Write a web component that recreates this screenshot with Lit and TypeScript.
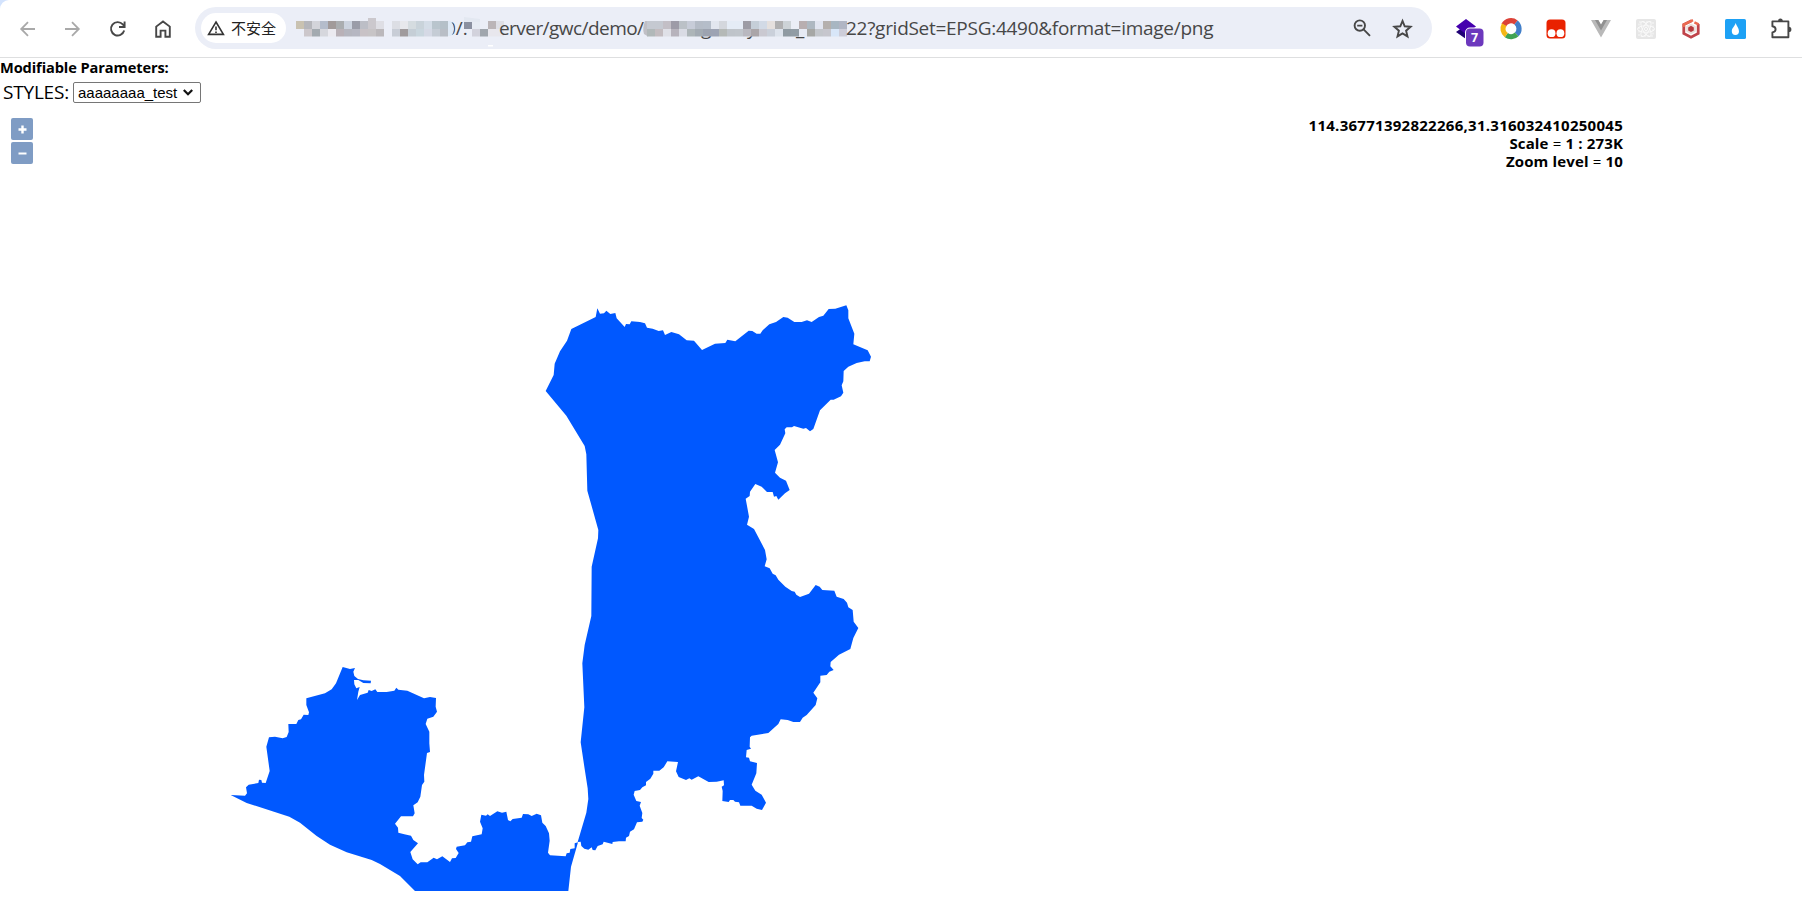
import { LitElement, html, svg, css } from "lit";
import { customElement, state } from "lit/decorators.js";

/** A run of outline vertices, in thirds of a pixel from its own survey origin. */
type Run = [number, number, string];

const EAST: Run[] = [
  [530, 290, "47,303 71,255 74,221 90,184 111,152 124,117 197,81 202,55 210,71 222,70 229,62 241,72 256,69 260,85 284,111 288,102 299,103 304,94 330,96 345,100 351,113 368,116 386,123 399,121 405,135 424,126 447,133 470,151 492,152 516,180 555,161 586,159 592,149 616,154 656,122 667,123 680,131 691,131 698,121 718,103 738,96 760,81 773,83 793,96 815,96 831,91 845,96 867,81 880,77 896,57 916,56 949,46 955,61 955,85 973,131 970,163 1013,181 1023,200 1019,214 1004,214 980,219 955,230 941,243 940,274 935,286 940,308 933,319 911,329 902,329 870,361 850,417 840,424 828,414 820,416 792,408 786,412 770,412 764,418 766,430 750,464 734,480 744,517 735,548 750,563 768,572 779,600 765,610 745,629 739,618 732,620 728,606 711,606 695,590 676,582 660,605 659,618 647,626 657,680 651,704"],
  [560, 470, "582,177 615,240 620,268 614,289 629,295 638,311 647,316 655,329 676,350 695,363 704,365 709,374 720,381 747,371 767,345 779,350 787,360 823,362 830,380 851,387 861,398 865,412 878,420 881,455 895,474 880,504 871,537 837,554 812,576 811,589 821,600 808,605 800,615 781,617 781,637"],
  [560, 660, "760,98 772,115 767,135 740,165 728,173 720,186 700,186 683,180 662,178 655,192 625,219 575,227 570,232 569,260 573,266 560,270 558,292 567,293 570,304 591,309 589,340 575,374 586,392 605,404 618,428 606,450 590,446 575,437 541,437 537,427 525,425 520,420 510,420 506,426 487,423 488,393 485,380 492,376 491,361 470,365 446,366 415,349 395,359 388,355 378,360 356,351 348,334 354,306 322,304 311,322 298,332 280,332 280,341 271,356 258,366 258,376 247,382 240,390 224,393 221,404 229,423 243,426 239,437 247,459 245,474 250,479 247,485 231,487 222,508 210,515 207,528 198,533 197,544 177,544 158,546 157,552 131,545 128,553 113,558 106,571 98,570 95,562 85,569 73,566 64,558 62,545 53,546 79,458 85,417 83,385 73,320 62,247 73,142 67,10"],
  [560, 470, "74,525 94,438 95,290 114,205 115,180 82,62"],
  [530, 290, "169,493 164,468 109,377"],
];

const WEST: Run[] = [
  [220, 650, "32,435 75,437 81,430 78,412 86,404 115,399 117,389 124,390 126,398 137,399 149,363 139,290 147,262 165,260 188,265 200,261 206,246 205,222 229,222 235,210 243,208 251,194 265,195 267,187 259,165 259,145 315,130 335,118 348,100 368,51 390,57 405,54 400,65 403,78 414,87 430,91 453,92 452,100 430,99 415,90 402,90 403,103 409,115 419,111 415,125 411,150 420,135 443,128 446,120 455,123 466,118 472,126 500,126 523,122 529,113 535,119 562,122 612,145 630,141 648,144 647,170 651,185 640,200 622,206 617,222 628,245 628,280 630,306 621,309 612,375 613,395 606,405 601,440 593,457 580,466 584,490 579,499 543,499 525,521 534,533 535,548 553,553 573,557 580,570 594,580 571,606 578,628"],
  [380, 780, "113,253 122,247 142,247 161,233 171,238 187,229 210,246 216,235 227,234 236,219 228,207 230,200 255,196 262,187 273,185 277,169 305,163 308,145 300,125 304,104 318,107 323,103 330,108 352,94 366,98 379,95 384,120 391,124 398,117 425,113 429,102 445,103 455,108 470,101 483,106 487,128 497,138 507,160 509,182 504,218 510,226 557,229 560,220 569,218 571,207 584,205 584,190 594,187 573,260 565,333 105,333 60,288 0,252"],
  [220, 650, "455,630 380,607 330,584 290,558 240,518 208,500 80,459"],
];

const outline = (runs: Run[]) =>
  runs
    .flatMap(([ox, oy, pts]) =>
      pts.split(" ").map((p) => {
        const [x, y] = p.split(",").map(Number);
        return `${(ox + x / 3).toFixed(2)},${(oy + y / 3).toFixed(2)}`;
      })
    )
    .join(" ");

/** Redaction tiles, 8px wide, two rows; "-" leaves a tile out. */
const HOST_TOP = "c9c2b1 b5b6bb d3d4da b4bccb a19a9a aaadb0 ccd3df 9a9ca8 bcbec6 cbc8cd dedee4 - dcdee4 e7e8ec d5dce0 c9d3da d4dde7 b9c5cd b5c0c8 - - 8a90a0 e6ebf3 - bbb5b8 dedfe6".split(" ");
const HOST_LOW = "- ccc7cb a3aab0 d6d7dd ebeaf0 b9b1b7 b5b6bf b6b7c2 c8c2c6 c7c4c6 bbb8bb - c8cdd6 a09b9d c5ced6 c9d6de d5d9e5 c5ccd5 b9bec6 - - - d2d2dc a0a6ad e8e7ed e8e7ed".split(" ");
const LAYER_TOP = "c5c9d1 c5c9d1 c3bfc6 9d9ba7 bbc1c7 c7ccd8 b5bcc7 b5bdc9 e2e6ef d4d7dd e5ecf6 e5ecf6 9d9ca5 c5ced8 d2dae6 e5e0de b0b0b1 cdd3d7 ebeef6 b8aeb0 aeb8c1 e1e5f0 b5b0ad a8b6c2 b0b5c4".split(" ");
const LAYER_LOW = "b1b8b9 c3bcc0 dfe0e7 b7b3bc d9dbe4 adb5b8 a3abb3 9da3b0 9da3b3 b5b9b7 bfc4ca c0c5cb b9b8bf aaa5a8 cac9d1 cad0da dde3ec 8f9aa2 919ca4 e6eaf4 a6a7a5 c3c6cb c6c6cd d8e6f8 cdcdd9".split(" ");

const tiles = (row: string[], x0: number, y: number, h: number) =>
  row.map((c, i) => (c === "-" ? "" : svg`<rect x=${x0 + i * 8} y=${y} width="8" height=${h} fill=${"#" + c}></rect>`));

@customElement("browser-toolbar")
export class BrowserToolbar extends LitElement {
  static styles = css`
    :host { display: block; background: #d3e3fd; }
    .bar {
      display: flex; align-items: center; height: 57px; box-sizing: content-box;
      padding-left: 5px; background: #fff; border-bottom: 1px solid #dedfe0; border-top-left-radius: 9px;
    }
    .cell { width: 45px; flex: none; display: flex; justify-content: center; }
    .cell svg, .tool svg { display: block; overflow: visible; }
    .omnibox {
      display: flex; align-items: center; box-sizing: border-box; width: 1237px; height: 42px; flex: none;
      margin: 0 11px 1px 10px; padding: 0 10px 0 6px; border-radius: 21px; background: #ebeef7;
    }
    .chip {
      display: flex; align-items: center; gap: 6px; box-sizing: border-box; width: 85px; height: 30px;
      padding-left: 6px; border-radius: 15px; background: #fff; color: #222;
      font: 15px/30px "Noto Sans CJK SC", sans-serif; white-space: nowrap; flex: none;
    }
    .url {
      display: flex; align-items: center; flex: 1; height: 42px; color: #474747; white-space: pre;
      font: 19px/42px "Open Sans", "Noto Sans", sans-serif;
    }
    .redact { display: block; flex: none; overflow: visible; }
    .host { margin-left: 10px; }
    .path { width: 145px; letter-spacing: -0.55px; flex: none; }
    .query { letter-spacing: -0.28px; }
    .tool { width: 40px; flex: none; display: flex; justify-content: center; }
    .mono { font: 19px "Open Sans", sans-serif; fill: #474747; }
    .count { font: bold 12.5px "Open Sans", sans-serif; fill: #fff; }
  `;

  render() {
    return html`
      <header class="bar">
        <div class="cell">
          <svg width="16" height="16" fill="none" stroke="#a9a9a9" stroke-width="1.8"><path d="M15 8H1.8M8 1.2L1.2 8L8 14.8"/></svg>
        </div>
        <div class="cell">
          <svg width="16" height="16" fill="none" stroke="#a9a9a9" stroke-width="1.8"><path d="M0 8H13.2M7 1.2L13.8 8L7 14.8"/></svg>
        </div>
        <div class="cell">
          <svg width="16" height="16" fill="none" stroke="#474747" stroke-width="1.9"><path d="M14.2 9.6A6.7 6.7 0 1 1 12.8 3.4L14.6 5.4M14.6 0.4V6H9"/></svg>
        </div>
        <div class="cell">
          <svg width="16" height="18" fill="none" stroke="#474747" stroke-width="1.9"><path d="M1.2 16.8V6.6L8 1.4L14.8 6.6V16.8H10.4V10.6H5.6V16.8Z"/></svg>
        </div>
        <div class="omnibox">
          <div class="chip">
            <svg width="18" height="16" fill="none" stroke="#333" stroke-width="1.6"><path d="M9 2L16.4 14.4H1.6ZM9 6.4V10.2M9 11.4V13"/></svg>
            <span>不安全</span>
          </div>
          <div class="url">
            <svg class="redact host" width="203" height="42">
              <text class="mono" x="149" y="28">0/.</text>
              ${tiles(HOST_TOP, 0, 14, 8)} ${tiles(HOST_LOW, 0, 22, 7.5)}
              <rect x="72" y="11" width="8" height="4" fill="#cbc8cd"></rect>
              <path d="M152 14h3q3 4 3 8t-3 7h-3z" fill="#dfeaf6"></path>
              <path d="M168 10l16 2v3h-16z" fill="#e3e8f1"></path>
              <rect x="192" y="38" width="5" height="1.5" fill="#fff"></rect>
            </svg>
            <span class="path">erver/gwc/demo/</span>
            <svg class="redact" width="202" height="42">
              <text class="mono" x="57" y="28">g</text><text class="mono" x="103" y="28">y</text><text class="mono" x="152" y="28">_</text>
              <path d="M4 14H1Q-2 22 0 27L4 29.5Z" fill="#c0bfc5"></path>
              ${tiles(LAYER_TOP, 3, 14, 8)} ${tiles(LAYER_LOW, 3, 22, 7.5)}
            </svg>
            <span class="query">22?gridSet=EPSG:4490&amp;format=image/png</span>
          </div>
          <div class="tool">
            <svg width="18" height="18" fill="none" stroke="#474747" stroke-width="1.9"><circle cx="6.8" cy="6.6" r="5.2"/><path d="M10.6 10.4L17 16.8M4.2 6.6H9.4"/></svg>
          </div>
          <div class="tool">
            <svg width="20" height="19" fill="none" stroke="#474747" stroke-width="1.9"><path d="M10.5 1.9L12.7 7.3L18.6 7.8L14.1 11.7L15.5 17.4L10.5 14.4L5.5 17.4L6.9 11.7L2.4 7.8L8.3 7.3Z"/></svg>
          </div>
        </div>
        <div class="cell">
          <svg width="20" height="20">
            <path d="M0 13L10 6L20 13L10 20Z" fill="#1f0075"/><path d="M0 7.6L10 0L20 7.6L10 15.2Z" fill="#4500ae"/>
            <rect x="9" y="8.5" width="19" height="20" rx="5" fill="#fff"/><rect x="10" y="9.5" width="17.5" height="18" rx="4" fill="#6c38bd"/>
            <text class="count" x="15" y="23">7</text>
          </svg>
        </div>
        <div class="cell">
          <svg width="20" height="20" fill="none" stroke-width="5.2">
            <path d="M2.8 6A8 8 0 0 1 15 3.5" stroke="#dc4238"/><path d="M15 3.5A8 8 0 0 1 15.7 15.4" stroke="#427fc9"/>
            <path d="M15.7 15.4A8 8 0 0 1 5.3 16.2" stroke="#40a354"/><path d="M5.3 16.2A8 8 0 0 1 3.2 5.7" stroke="#f5b716"/>
          </svg>
        </div>
        <div class="cell">
          <svg width="20" height="20"><rect x=".5" y=".5" width="19" height="19" rx="3.5" fill="#e92200"/><circle cx="5.6" cy="14.2" r="3.9" fill="#fff"/><circle cx="14.4" cy="14.2" r="3.9" fill="#fff"/></svg>
        </div>
        <div class="cell">
          <svg width="20" height="18"><path d="M0 0H7L10 5.2L13 0H20L10 17.6Z" fill="#b9b9b9"/><path d="M4 0H7.4L10 4.6L12.6 0H16L10 10.6Z" fill="#909090"/></svg>
        </div>
        <div class="cell">
          <svg width="20" height="20" fill="none" stroke="#fafafa" stroke-width=".9">
            <rect width="20" height="20" rx="2" fill="#e6e6e6" stroke="none"/>
            <ellipse cx="10" cy="10" rx="8.5" ry="3.3"/><ellipse cx="10" cy="10" rx="8.5" ry="3.3" transform="rotate(60 10 10)"/><ellipse cx="10" cy="10" rx="8.5" ry="3.3" transform="rotate(120 10 10)"/>
            <path d="M3 3H17V17H3Z" stroke-dasharray="2 1.5"/><circle cx="10" cy="10" r="1.6"/>
          </svg>
        </div>
        <div class="cell">
          <svg width="18" height="20" fill="none">
            <path d="M9.6 1.8L1.8 5.6V14.4L9 18.2L16.2 14.4V5" stroke="#c0444a" stroke-width="2.8"/><path d="M1.8 8V5.6L11 1.2M12.4 3.4L16.6 5.4" stroke="#ea6a50" stroke-width="2.6"/>
            <path d="M9 4.6L13.8 7.2V12.6L9 15.2L4.2 12.6V7.2Z" fill="#eadfda"/><path d="M9 6.8L11.8 8.6V11.4L9 13L6.2 11.4V8.6Z" fill="#b8383c"/>
          </svg>
        </div>
        <div class="cell">
          <svg width="21" height="20"><rect width="21" height="20" rx="1.6" fill="#1da1f5"/><path d="M10.6 4C11.4 7 14 9 14 12.2A3.6 3.7 0 0 1 6.8 12.2C6.8 9 9.8 7.4 10.6 4Z" fill="#fff"/></svg>
        </div>
        <div class="cell">
          <svg width="20" height="20">
            <path d="M1.4 2.4H17.4V18.2H1.4V13.4Q4.6 13 4.6 10.3T1.4 7.2Z" fill="none" stroke="#474747" stroke-width="1.9" stroke-linejoin="round"/>
            <path d="M7 2.2A2.4 2.6 0 0 1 11.8 2.2ZM17.8 7.8A2.6 2.6 0 0 1 17.8 13Z" fill="#474747"/>
          </svg>
        </div>
      </header>
    `;
  }
}

@customElement("layer-map")
export class LayerMap extends LitElement {
  static styles = css`
    :host { display: block; position: relative; width: 1634px; height: 781px; }
    .canvas { display: block; }
    .region { fill: #0058ff; }
    .zoom { position: absolute; left: 11px; top: 8px; display: grid; gap: 2px; }
    .btn {
      width: 22px; height: 22px; padding: 0; border: 0; border-radius: 2px; background: #7f9cc4;
      display: grid; place-items: center;
    }
    .info {
      position: absolute; right: 11px; top: 6px; text-align: right; color: #000;
      font: 700 15px/18px "Open Sans", "Noto Sans", sans-serif; letter-spacing: 0.15px;
    }
    .coords { letter-spacing: 0.27px; }
    .eq { font-weight: 400; }
  `;

  @state() private level = 10;

  render() {
    return html`
      <svg class="canvas" width="1634" height="781" viewBox="0 110 1634 781">
        <polygon class="region" points=${outline(EAST)}></polygon>
        <polygon class="region" points=${outline(WEST)}></polygon>
      </svg>
      <div class="zoom">
        <button class="btn" aria-label="Zoom in" @click=${() => this.level++}>
          <svg width="9" height="9"><path d="M4.5 .5V8.5M.5 4.5H8.5" stroke="#fff" stroke-width="2.4"/></svg>
        </button>
        <button class="btn" aria-label="Zoom out" @click=${() => this.level--}>
          <svg width="9" height="9"><path d="M.5 4.5H8.5" stroke="#fff" stroke-width="2"/></svg>
        </button>
      </div>
      <div class="info">
        <div class="coords">114.36771392822266,31.316032410250045</div>
        <div>Scale <span class="eq">=</span> 1 : 273K</div>
        <div>Zoom level <span class="eq">=</span> ${this.level}</div>
      </div>
    `;
  }
}

@customElement("app-root")
export class AppRoot extends LitElement {
  static styles = css`
    :host { display: block; width: 1802px; height: 924px; overflow: hidden; background: #fff; color: #000; }
    .title { margin: 0; height: 20px; font: bold 14.6px/18px "Open Sans", "Noto Sans", sans-serif; letter-spacing: -0.1px; }
    .params { display: flex; align-items: center; height: 32px; padding-left: 3px; box-sizing: border-box; }
    .label { width: 70px; height: 32px; font: 19px/28px "Open Sans", "Noto Sans", sans-serif; letter-spacing: -0.2px; white-space: nowrap; }
    .select {
      display: flex; align-items: center; gap: 6px; box-sizing: border-box; width: 128px; height: 21px; margin-bottom: 3px;
      padding-left: 4px; border: 1px solid #767676; border-radius: 2px; font: 15px/19px "Liberation Sans", sans-serif;
    }
  `;

  render() {
    return html`
      <browser-toolbar></browser-toolbar>
      <h1 class="title">Modifiable Parameters:</h1>
      <div class="params">
        <span class="label">STYLES:</span>
        <div class="select">
          <span>aaaaaaaa_test</span>
          <svg width="10" height="7" fill="none" stroke="#111" stroke-width="2.2"><path d="M.8 1L5 5.2L9.2 1"/></svg>
        </div>
      </div>
      <layer-map></layer-map>
    `;
  }
}
